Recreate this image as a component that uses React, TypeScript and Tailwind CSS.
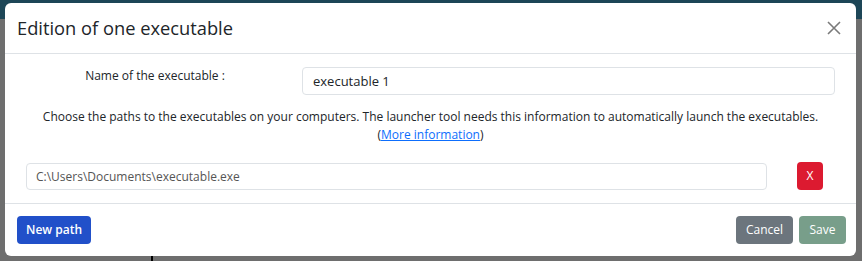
export default function App() {
  return (
    <div className="relative h-[261px] w-[862px] overflow-hidden bg-[#6e6e6e] font-['Open_Sans',sans-serif]">
      {/* backdrop */}
      <div className="absolute inset-x-0 top-0 h-[19px] bg-[#1d4657]" />
      <div className="absolute left-[151px] top-[250px] h-[11px] w-[2px] bg-black" />

      {/* Modal */}
      <div className="relative ml-[5px] mt-[3px] flex h-[253px] w-[851px] flex-col rounded-[6px] bg-white">
        {/* Header */}
        <div className="flex h-[51px] shrink-0 items-center justify-between border-b border-[#dee2e6] pl-[12px] pr-[14px]">
          <h5 className="text-[18.3px] leading-none text-[#212529]">Edition of one executable</h5>
          <button className="flex h-[16px] w-[16px] items-center justify-center text-[#7a7a7a]" aria-label="Close">
            <svg width="14" height="14" viewBox="0 0 14 14" fill="none" stroke="currentColor" strokeWidth="1.6">
              <path d="M1 1L13 13M13 1L1 13" />
            </svg>
          </button>
        </div>

        {/* Body */}
        <div className="flex flex-1 flex-col px-[21px] pt-[13px] text-[12px] text-[#212529]">
          <div className="flex items-center">
            <div className="mr-[18px] w-[258px] pb-[10px] text-center">Name of the executable :</div>
            <input
              className="h-[28px] flex-1 rounded-[4px] border border-[#dee2e6] px-[10px] text-[13px] outline-none"
              defaultValue="executable 1"
            />
          </div>
          <p className="mt-[13px] text-center leading-[18px]">
            Choose the paths to the executables on your computers. The launcher tool needs this information to
            automatically launch the executables.
            <br />(<a href="#" className="text-[#0d6efd] underline">More information</a>)
          </p>
          <div className="mt-[18px] flex items-center">
            <input
              className="h-[27px] w-[741px] rounded-[4px] border border-[#dee2e6] px-[9px] text-[12px] text-[#555] outline-none"
              defaultValue="C:\Users\Documents\executable.exe"
            />
            <button className="ml-[30px] flex h-[28px] w-[26px] items-center justify-center rounded-[4px] bg-[#dc1a30] text-[12px] text-white">
              X
            </button>
          </div>
        </div>

        {/* Footer */}
        <div className="flex h-[53px] shrink-0 items-center justify-between border-t border-[#dee2e6] pl-[12px] pr-[10px]">
          <button className="h-[28px] rounded-[4px] bg-[#2150c9] px-[9px] text-[12px] font-semibold text-white">
            New path
          </button>
          <div className="flex gap-[6px]">
            <button className="h-[28px] w-[57px] rounded-[4px] bg-[#6c757d] text-[12px] text-white">Cancel</button>
            <button className="h-[28px] w-[47px] rounded-[4px] bg-[#789e8a] text-[12px] text-white">Save</button>
          </div>
        </div>
      </div>
    </div>
  );
}
